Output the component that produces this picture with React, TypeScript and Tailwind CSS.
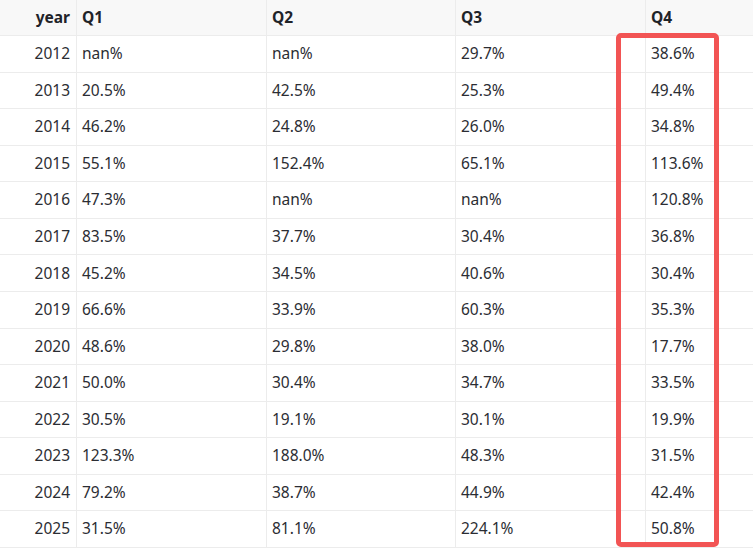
import React from 'react';

const rows: [string, string, string, string, string][] = [
  ['2012', 'nan%', 'nan%', '29.7%', '38.6%'],
  ['2013', '20.5%', '42.5%', '25.3%', '49.4%'],
  ['2014', '46.2%', '24.8%', '26.0%', '34.8%'],
  ['2015', '55.1%', '152.4%', '65.1%', '113.6%'],
  ['2016', '47.3%', 'nan%', 'nan%', '120.8%'],
  ['2017', '83.5%', '37.7%', '30.4%', '36.8%'],
  ['2018', '45.2%', '34.5%', '40.6%', '30.4%'],
  ['2019', '66.6%', '33.9%', '60.3%', '35.3%'],
  ['2020', '48.6%', '29.8%', '38.0%', '17.7%'],
  ['2021', '50.0%', '30.4%', '34.7%', '33.5%'],
  ['2022', '30.5%', '19.1%', '30.1%', '19.9%'],
  ['2023', '123.3%', '188.0%', '48.3%', '31.5%'],
  ['2024', '79.2%', '38.7%', '44.9%', '42.4%'],
  ['2025', '31.5%', '81.1%', '224.1%', '50.8%'],
];

const cols = 'grid grid-cols-[77px_190px_189px_190px_190px]';

export default function App() {
  return (
    <div className="relative w-[753px] h-[548px] overflow-hidden bg-white font-['Segoe_UI','Noto_Sans',sans-serif] text-[15.5px] text-[#2b2d33]">
      <div className="w-[836px]">
        {/* header */}
        <div className={`${cols} h-[36px] bg-[#f8f8f8] border-b border-[#ececec] font-bold text-[#1f2329]`}>
          <div className="flex items-center justify-end pr-[6px] border-r border-[#ececec]">year</div>
          <div className="flex items-center pl-[5px] border-r border-[#ececec]">Q1</div>
          <div className="flex items-center pl-[5px] border-r border-[#ececec]">Q2</div>
          <div className="flex items-center pl-[5px] border-r border-[#ececec]">Q3</div>
          <div className="flex items-center pl-[5px]">Q4</div>
        </div>
        {rows.map((r) => (
          <div key={r[0]} className={`${cols} h-[36.57px] border-b border-[#ececec]`}>
            <div className="flex items-center justify-end pr-[6px] border-r border-[#ececec]">{r[0]}</div>
            <div className="flex items-center pl-[5px] border-r border-[#ececec]">{r[1]}</div>
            <div className="flex items-center pl-[5px] border-r border-[#ececec]">{r[2]}</div>
            <div className="flex items-center pl-[5px] border-r border-[#ececec]">{r[3]}</div>
            <div className="flex items-center pl-[5px]">{r[4]}</div>
          </div>
        ))}
      </div>
      {/* highlight box over Q4 */}
      <div className="absolute left-[616px] top-[33px] w-[103px] h-[514px] border-[5px] border-[#f25454] rounded-[5px]" />
    </div>
  );
}
